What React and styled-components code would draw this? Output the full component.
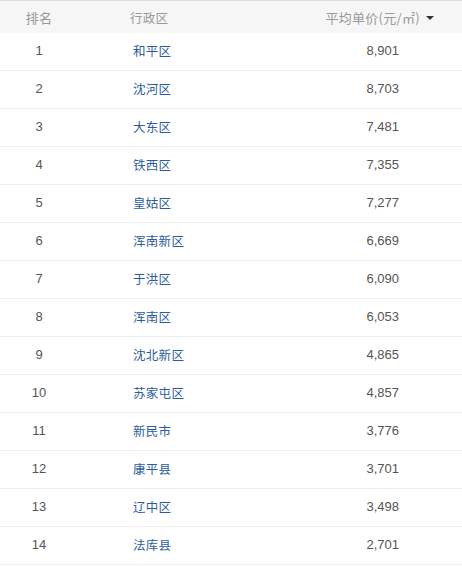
import React from 'react';
import styled, { createGlobalStyle } from 'styled-components';

const GlobalStyle = createGlobalStyle`
    body {
        margin: 0;
        background: #fff;
        font-family: "Liberation Sans", "Noto Sans CJK SC", sans-serif;
    }
`;

const rows = [
    ['和平区', '8,901'],
    ['沈河区', '8,703'],
    ['大东区', '7,481'],
    ['铁西区', '7,355'],
    ['皇姑区', '7,277'],
    ['浑南新区', '6,669'],
    ['于洪区', '6,090'],
    ['浑南区', '6,053'],
    ['沈北新区', '4,865'],
    ['苏家屯区', '4,857'],
    ['新民市', '3,776'],
    ['康平县', '3,701'],
    ['辽中区', '3,498'],
    ['法库县', '2,701'],
];

const Table = styled.div`
    width: 462px;
    border-top: 1px solid #dcdce4;
`;

const Row = styled.div`
    display: flex;
    align-items: center;
    box-sizing: border-box;
    height: ${({ head }) => (head ? 32 : 38)}px;
    padding-bottom: ${({ head }) => (head ? 0 : 3)}px;
    background: ${({ head }) => (head ? '#f6f6f6' : '#fff')};
    border-bottom: ${({ head }) => (head ? 'none' : '1px solid #eeeeee')};
    font-size: 13px;
    color: ${({ head }) => (head ? '#999' : '#555')};
`;

const Rank = styled.div`
    width: 78px;
    text-align: center;
`;

const District = styled.div`
    flex: 1;
    padding-left: ${({ head }) => (head ? 52 : 55)}px;
    color: ${({ head }) => (head ? '#999' : '#2a5d9f')};
    font-family: "Noto Sans CJK SC", sans-serif;
    font-size: 12.5px;
    letter-spacing: 0.3px;
`;

const Price = styled.div`
    text-align: right;
    padding-right: ${({ head }) => (head ? 28 : 63)}px;
    display: flex;
    align-items: center;
    gap: 6px;
`;

const Caret = styled.span`
    width: 0;
    height: 0;
    border-left: 4px solid transparent;
    border-right: 4px solid transparent;
    border-top: 4px solid #333;
    margin-top: 1px;
`;

const HeadText = styled.span`
    font-family: "Noto Sans CJK SC", sans-serif;
    font-size: 13px;
    letter-spacing: 0.3px;
`;

export default function App() {
    return (
        <>
            <GlobalStyle />
            <Table>
                <Row head>
                    <Rank><HeadText>排名</HeadText></Rank>
                    <District head>行政区</District>
                    <Price head>
                        <HeadText>平均单价(元/㎡)</HeadText>
                        <Caret />
                    </Price>
                </Row>
                {rows.map(([name, price], i) => (
                    <Row key={name}>
                        <Rank>{i + 1}</Rank>
                        <District>{name}</District>
                        <Price>{price}</Price>
                    </Row>
                ))}
            </Table>
        </>
    );
}
